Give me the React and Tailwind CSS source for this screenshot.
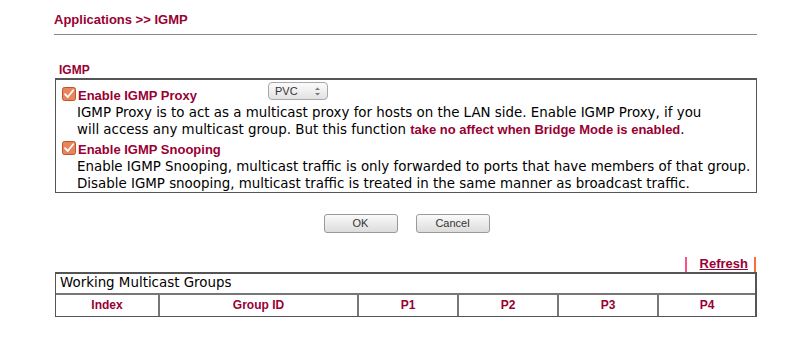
import React from 'react';

const red = 'text-[#990033]';

function Check() {
  return (
    <svg width="14" height="14" viewBox="0 0 14 14" className="shrink-0">
      <rect x="0.5" y="0.5" width="13" height="13" rx="2" fill="#e9855b" stroke="#b8572f" />
      <path d="M3 7.2 L5.8 10 L11.2 3.2" fill="none" stroke="#fff" strokeWidth="1.8" strokeLinecap="round" strokeLinejoin="round" />
    </svg>
  );
}

function Btn({ children }) {
  return (
    <button className="w-[74px] h-[19px] rounded-[3px] border border-[#9a9a9a] bg-gradient-to-b from-[#fafafa] to-[#dcdcdc] text-[11px] text-[#333] font-['Liberation_Sans',sans-serif] leading-none">
      {children}
    </button>
  );
}

export default function App() {
  const cols = [
    ['Index', 'w-[102px]'],
    ['Group ID', 'w-[199px]'],
    ['P1', 'w-[100px]'],
    ['P2', 'w-[100px]'],
    ['P3', 'w-[100px]'],
    ['P4', 'flex-1'],
  ];
  return (
    <div className="w-[792px] h-[360px] bg-white font-['DejaVu_Sans',sans-serif] text-[13.4px] text-black">
      <div className="ml-[54px] w-[703px] pt-[10px]">
        <div className={`font-['Liberation_Sans',sans-serif] font-bold text-[13px] ${red} pb-[4px] border-b border-[#888]`}>
          Applications &gt;&gt; IGMP
        </div>

        <div className={`mt-[26px] ml-[5px] font-['Liberation_Sans',sans-serif] font-bold text-[12px] ${red}`}>IGMP</div>

        <div className="-mt-[1px] ml-[1px] border border-[#555] border-t-[2px] pl-[6px] pr-[1px] pt-[5px] pb-0 leading-[17px]">
          <div className="flex items-center gap-[2px]">
            <Check />
            <span className={`font-['Liberation_Sans',sans-serif] font-bold text-[13px] ${red} w-[188px] pt-[2px]`}>Enable IGMP Proxy</span>
            <div className="-mt-[6px] w-[60px] h-[18px] rounded-[4px] border border-[#a8a8a8] bg-gradient-to-b from-[#fbfbfb] to-[#e2e2e2] flex items-center justify-between px-[6px] text-[11px] text-[#333] font-['Liberation_Sans',sans-serif]">
              <span>PVC</span>
              <svg width="7" height="11" viewBox="0 0 7 11">
                <path d="M1 4 L3.5 1.5 L6 4 Z M1 7 L3.5 9.5 L6 7 Z" fill="#777" />
              </svg>
            </div>
          </div>
          <div className="pl-[15px] w-[650px]">
            IGMP Proxy is to act as a multicast proxy for hosts on the LAN side. Enable IGMP Proxy, if you will access any multicast group. But this function{' '}
            <span className={`font-['Liberation_Sans',sans-serif] font-bold text-[13px] ${red}`}>take no affect when Bridge Mode is enabled</span>.
          </div>
          <div className="flex items-center gap-[2px] mt-[1px]">
            <Check />
            <span className={`font-['Liberation_Sans',sans-serif] font-bold text-[13px] ${red} pt-[2px]`}>Enable IGMP Snooping</span>
          </div>
          <div className="pl-[15px]">
            Enable IGMP Snooping, multicast traffic is only forwarded to ports that have members of that group. Disable IGMP snooping, multicast traffic is treated in the same manner as broadcast traffic.
          </div>
        </div>

        <div className="flex justify-center gap-[18px] mt-[21px] pl-[2px]">
          <Btn>OK</Btn>
          <Btn>Cancel</Btn>
        </div>

        <div className="flex justify-end mt-[24px] pr-[1px]">
          <div className="border-l-[2px] border-r-[2px] border-l-[#ff4f8a] border-r-[#ff6a3a] pl-[13px] pr-[6px] h-[15px] flex items-center">
            <a href="#" className={`font-['Liberation_Sans',sans-serif] font-bold text-[13px] underline ${red}`}>Refresh</a>
          </div>
        </div>

        <div className="ml-[1px] border border-[#555] border-t-[2px] border-r-[2px]">
          <div className="h-[21px] flex items-center pl-[4px] border-b-[2px] border-[#777]">Working Multicast Groups</div>
          <div className="flex h-[21px]">
            {cols.map(([c, w], i) => (
              <div key={c} className={`${w} flex items-center justify-center font-['Liberation_Sans',sans-serif] font-bold text-[12px] ${red} ${i > 0 ? 'border-l-[2px] border-[#777]' : ''}`}>
                {c}
              </div>
            ))}
          </div>
        </div>
      </div>
    </div>
  );
}
